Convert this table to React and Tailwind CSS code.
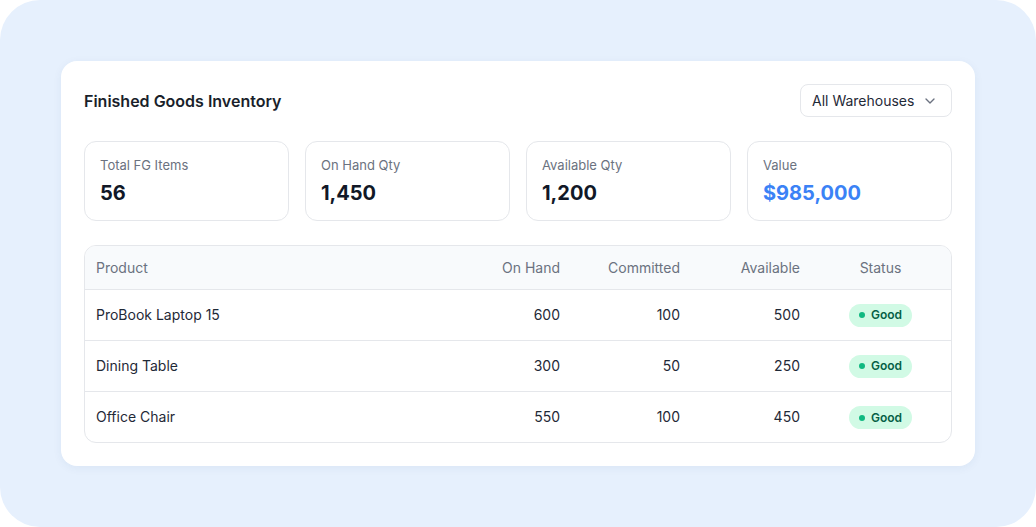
import { ChevronDown } from "lucide-react";

const stats = [
  { label: "Total FG Items", value: "56" },
  { label: "On Hand Qty", value: "1,450" },
  { label: "Available Qty", value: "1,200" },
  { label: "Value", value: "$985,000", accent: true },
];

const rows = [
  { product: "ProBook Laptop 15", onHand: 600, committed: 100, available: 500 },
  { product: "Dining Table", onHand: 300, committed: 50, available: 250 },
  { product: "Office Chair", onHand: 550, committed: 100, available: 450 },
];

export default function App() {
  return (
    <div
      className="w-[1036px] h-[527px] bg-white"
      style={{ fontFamily: "Inter, 'Noto Sans', sans-serif" }}
    >
      <div className="w-full h-full bg-[#e6f0fd] rounded-[40px] p-[61px]">
        {/* Card */}
        <div className="bg-white rounded-2xl shadow-[0_2px_10px_rgba(30,60,120,0.06)] px-[23px] pt-[23px] pb-[23px]">
          <div className="flex items-center justify-between h-[33px]">
            <h2 className="text-[16px] font-semibold text-[#1a1f2b]">Finished Goods Inventory</h2>
            <button className="h-[33px] w-[152px] border border-[#e5e7eb] rounded-lg flex items-center justify-between pl-[11px] pr-[13px] text-[14px] text-[#1f2937]">
              All Warehouses
              <ChevronDown size={16} strokeWidth={2} className="text-[#6b7280]" />
            </button>
          </div>

          {/* Stat cards */}
          <div className="grid grid-cols-4 gap-4 mt-6">
            {stats.map((s) => (
              <div key={s.label} className="h-[80px] border border-[#e5e7eb] rounded-xl px-[15px] pt-[14px]">
                <div className="text-[13px] text-[#6b7280] leading-[18px]">{s.label}</div>
                <div className={`text-[20px] font-bold leading-[28px] mt-[5px] ${s.accent ? "text-[#3b82f6]" : "text-[#111827]"}`}>
                  {s.value}
                </div>
              </div>
            ))}
          </div>

          {/* Table */}
          <div className="mt-6 border border-[#e5e7eb] rounded-xl overflow-hidden">
            <table className="w-full table-fixed text-[14px]">
              <colgroup>
                <col className="w-[367px]" />
                <col className="w-[120px]" />
                <col className="w-[120px]" />
                <col className="w-[120px]" />
                <col />
              </colgroup>
              <thead>
                <tr className="bg-[#f8fafc] h-[43px] text-[#6b7280]">
                  <th className="text-left font-normal pl-[11px] pr-3">Product</th>
                  <th className="text-right font-normal px-3">On Hand</th>
                  <th className="text-right font-normal px-3">Committed</th>
                  <th className="text-right font-normal px-3">Available</th>
                  <th className="text-center font-normal pl-3 pr-[14px]">Status</th>
                </tr>
              </thead>
              <tbody className="text-[#1f2937]">
                {rows.map((r) => (
                  <tr key={r.product} className="h-[51px] border-t border-[#e5e7eb]">
                    <td className="pl-[11px] pr-3">{r.product}</td>
                    <td className="px-3 text-right">{r.onHand}</td>
                    <td className="px-3 text-right">{r.committed}</td>
                    <td className="px-3 text-right">{r.available}</td>
                    <td className="pl-3 pr-[14px] text-center">
                      <span className="inline-flex items-center gap-[6px] h-[23px] px-[10px] rounded-full bg-[#d1fae5] text-[#065f46] text-[12px] font-semibold">
                        <span className="w-[6px] h-[6px] rounded-full bg-[#10b981]" />
                        Good
                      </span>
                    </td>
                  </tr>
                ))}
              </tbody>
            </table>
          </div>
        </div>
      </div>
    </div>
  );
}
